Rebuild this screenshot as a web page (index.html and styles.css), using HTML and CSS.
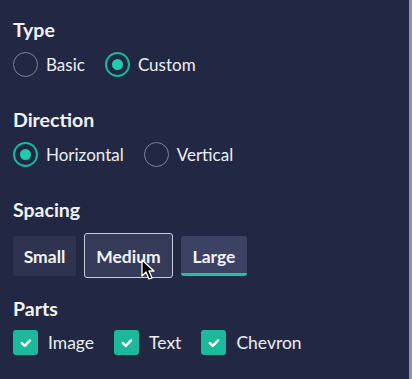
FILE: index.html
```html
<!DOCTYPE html>
<html lang="en">
<head>
    <meta charset="UTF-8">
    <meta name="viewport" content="width=device-width, initial-scale=1.0">
    <title>Card Settings</title>
    <link rel="stylesheet" href="styles.css">
</head>
<body>

<div class="panel">
    <section class="group group-type">
        <h2>Type</h2>
        <div class="options">
            <label class="radio"><span class="dot"></span>Basic</label>
            <label class="radio checked"><span class="dot"></span>Custom</label>
        </div>
    </section>

    <section class="group group-direction">
        <h2>Direction</h2>
        <div class="options">
            <label class="radio checked"><span class="dot"></span>Horizontal</label>
            <label class="radio"><span class="dot"></span>Vertical</label>
        </div>
    </section>

    <section class="group group-spacing">
        <h2>Spacing</h2>
        <div class="buttons">
            <button class="seg small">Small</button>
            <button class="seg hover">Medium</button>
            <button class="seg active">Large</button>
            <svg class="cursor" width="16" height="22" viewBox="0 0 16 22">
                <path d="M1 1 L1 17 L5 13 L8 20 L11 19 L8 12 L13 12 Z" fill="#000" stroke="#fff" stroke-width="1.3" stroke-linejoin="round"/>
            </svg>
        </div>
    </section>

    <section class="group group-parts">
        <h2>Parts</h2>
        <div class="options checks">
            <label class="check"><span class="box"><svg width="14" height="14" viewBox="0 0 14 14"><path d="M2.8 7 L5.8 9.8 L11 4.4" fill="none" stroke="#fff" stroke-width="2.4" stroke-linecap="round" stroke-linejoin="round"/></svg></span>Image</label>
            <label class="check"><span class="box"><svg width="14" height="14" viewBox="0 0 14 14"><path d="M2.8 7 L5.8 9.8 L11 4.4" fill="none" stroke="#fff" stroke-width="2.4" stroke-linecap="round" stroke-linejoin="round"/></svg></span>Text</label>
            <label class="check"><span class="box"><svg width="14" height="14" viewBox="0 0 14 14"><path d="M2.8 7 L5.8 9.8 L11 4.4" fill="none" stroke="#fff" stroke-width="2.4" stroke-linecap="round" stroke-linejoin="round"/></svg></span>Chevron</label>
        </div>
    </section>
</div>

</body>
</html>
```

FILE: styles.css
```css
html, body {
    margin: 0;
    height: 100%;
}
body {
    font-family: 'Lato', 'Open Sans', sans-serif;
    background-color: #1f253d;
    color: #eceef4;
}
.panel {
    box-sizing: border-box;
    width: 412px;
    height: 379px;
    padding: 19px 0 0 13px;
    background-color: #222843;
    border-right: 3px solid #8d94a5;
}
h2 {
    margin: 0;
    font-size: 19.5px;
    line-height: 22px;
    font-weight: 700;
    color: #f1f2f6;
}
.group-direction {
    margin-top: 32px;
}
.group-spacing {
    margin-top: 32px;
}
.group-parts {
    margin-top: 20px;
}
.options {
    display: flex;
    align-items: center;
    gap: 20px;
    margin-top: 11px;
}
.radio,
.check {
    display: flex;
    align-items: center;
    gap: 8px;
    font-size: 17px;
    line-height: 25px;
}
.dot {
    box-sizing: border-box;
    width: 25px;
    height: 25px;
    border-radius: 50%;
    border: 1.5px solid #7d8298;
    display: flex;
    align-items: center;
    justify-content: center;
}
.radio.checked .dot {
    border: 2px solid #1bb89c;
}
.radio.checked .dot::after {
    content: '';
    width: 11px;
    height: 11px;
    border-radius: 50%;
    background-color: #22cbaa;
}
.buttons {
    position: relative;
    display: flex;
    align-items: center;
    gap: 8px;
    margin-top: 12px;
}
.seg {
    box-sizing: border-box;
    height: 40px;
    padding: 2px 0 0;
    border: none;
    border-radius: 3px;
    background-color: #2e344f;
    color: #f1f2f6;
    font-family: inherit;
    font-size: 17.5px;
    font-weight: 700;
}
.seg.small {
    width: 63px;
}
.seg.hover {
    width: 89px;
    height: 45px;
    background-color: #353b59;
    border: 1.5px solid #c9cdd9;
}
.seg.active {
    width: 66px;
    background-color: #3c4263;
    border-bottom: 3px solid #1fc3a4;
    padding-top: 4px;
}
.cursor {
    position: absolute;
    left: 128px;
    top: 26px;
}
.checks {
    margin-top: 10px;
}
.check {
    gap: 10px;
    font-size: 17.5px;
}
.box {
    width: 25px;
    height: 25px;
    border-radius: 3px;
    background-color: #1db99d;
    display: flex;
    align-items: center;
    justify-content: center;
}
```
